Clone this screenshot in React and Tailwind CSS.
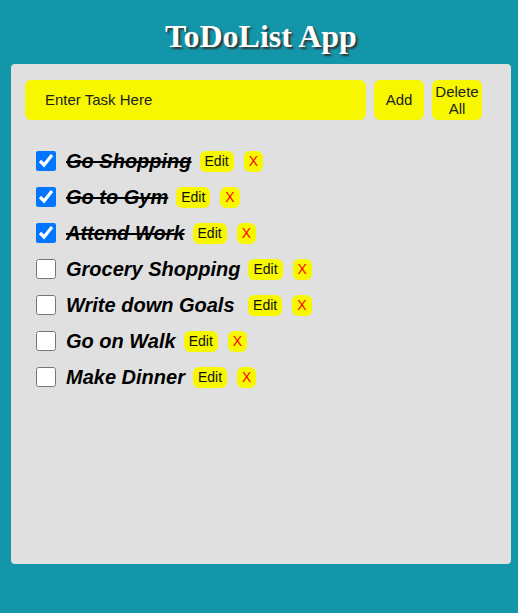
import React from "react";

const tasks = [
  { t: "Go Shopping", done: true },
  { t: "Go to Gym", done: true },
  { t: "Attend Work", done: true },
  { t: "Grocery Shopping", done: false },
  { t: "Write down Goals ", done: false },
  { t: "Go on Walk", done: false },
  { t: "Make Dinner", done: false },
];

export default function App() {
  return (
    <div className="min-h-[613px] w-[518px] bg-[#1396a9] pt-[18px] pb-[50px] font-['Liberation_Sans',Arial,sans-serif]">
      <h1 className="pl-[4px] text-center text-[32px] leading-[36px] font-bold text-white font-['Liberation_Serif','Times_New_Roman',serif] [text-shadow:2px_2px_2px_#333]">
        ToDoList App
      </h1>
      <div className="ml-[11px] mt-[10px] w-[500px] h-[500px] rounded-[4px] bg-[#e0e0e0] pl-[14px] pt-[16px]">
        <div className="flex items-center gap-[8px]">
          <div className="w-[341px] h-[40px] rounded-[6px] bg-[#f7f700] flex items-center pl-[20px] text-[15px] text-[#222]">
            Enter Task Here
          </div>
          <button className="w-[50px] h-[40px] rounded-[6px] bg-[#f7f700] text-[15px] text-[#222]">
            Add
          </button>
          <button className="w-[50px] h-[40px] rounded-[6px] bg-[#f7f700] text-[15px] leading-[17px] text-[#222]">
            Delete
            <br />
            All
          </button>
        </div>
        <div className="mt-[31px] pl-[11px] flex flex-col gap-[16px]">
          {tasks.map((x, i) => (
            <div key={i} className="flex items-center h-[20px]">
              <input
                type="checkbox"
                defaultChecked={x.done}
                className="w-[20px] h-[20px] m-0 accent-[#0075ff]"
              />
              <span
                className={
                  "ml-[10px] text-[20px] font-bold italic text-black whitespace-pre " +
                  (x.done ? "line-through" : "")
                }
              >
                {x.t}
              </span>
              <button className="ml-[8px] h-[21px] px-[5px] rounded-[6px] bg-[#f7f700] text-[14px] leading-[21px] text-[#111]">
                Edit
              </button>
              <button className="ml-[10px] h-[21px] px-[5px] rounded-[6px] bg-[#f7f700] text-[14px] leading-[21px] text-[#f00]">
                X
              </button>
            </div>
          ))}
        </div>
      </div>
    </div>
  );
}
